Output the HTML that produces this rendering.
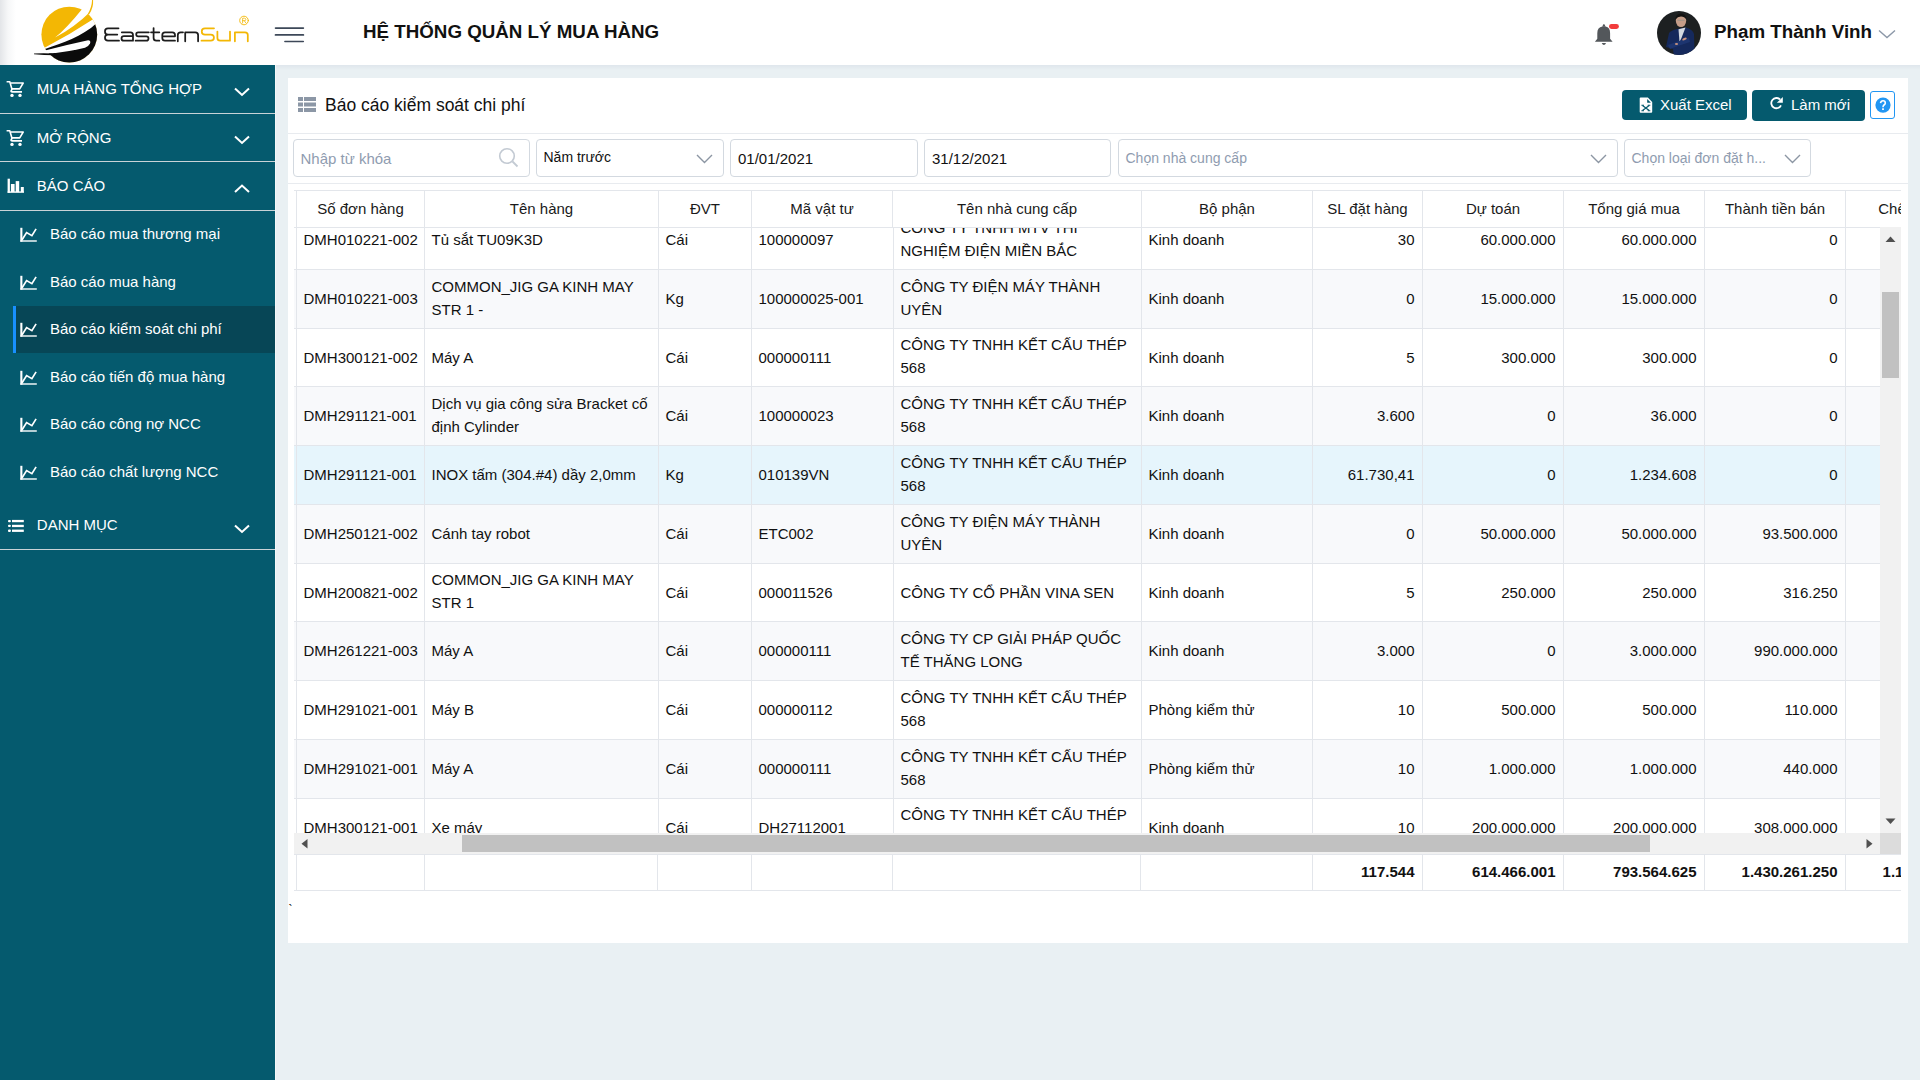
<!DOCTYPE html><html><head><meta charset="utf-8"><style>
*{box-sizing:border-box;margin:0;padding:0}
html,body{width:1920px;height:1080px;overflow:hidden}
body{background:#e9f0f3;font-family:"Liberation Sans", sans-serif;color:#000;position:relative}
.t{position:absolute;white-space:nowrap}
.a{position:absolute}
#hdr{position:absolute;left:0;top:0;width:1920px;height:65px;background:linear-gradient(to right,#e3e5e8 0,#f6f7f8 8px,#fff 16px)}
#side{position:absolute;left:0;top:65px;width:275px;height:1015px;background:#055a6e}
.sep{position:absolute;left:0;width:275px;height:1px;background:#c9d3d7}
#card{position:absolute;left:288px;top:78px;width:1620px;height:865px;background:#fff}
.hl{position:absolute;height:1px;background:#e8ebef}
.inp{position:absolute;top:139px;height:38px;border:1px solid #d3d9e0;border-radius:4px;background:#fff}
.btn{position:absolute;background:#055a6e;border-radius:4px}

.th,.td,.tf{position:absolute;border-left:1px solid #e3e6eb;font-size:15px;line-height:23px;display:flex;align-items:center;white-space:nowrap;overflow:hidden}
.th{justify-content:center;color:#1a1a1a;padding-bottom:2px}
.td{padding:0 7.5px 0 6.5px;color:#111}
.td.r{justify-content:flex-end}
.tf{padding:0 7.5px;font-weight:700;justify-content:flex-end;color:#111}
</style></head><body><div id="hdr"></div>
<div class="a" style="left:276px;top:65px;width:1644px;height:5px;background:linear-gradient(#dfe6ec,#e9f0f3)"></div>
<svg class="a" style="left:0;top:0" width="260" height="65" viewBox="0 0 260 65">
<defs><clipPath id="cc"><circle cx="69.3" cy="34.6" r="27.9"/></clipPath></defs>
<g clip-path="url(#cc)">
<rect x="35" y="0" width="70" height="70" fill="#f3b704"/>
<path d="M30 48.6 L44.6 47.8 Q70 34.5 93.5 19 L110 15 L110 70 L30 70Z" fill="#fff"/>
<path d="M30 50 L45.8 48.75 C62 43 82 37 96.7 23 L110 20 L110 70 L30 70Z" fill="#0b0b0b"/>
</g>
<path d="M55 37.6 Q66 29 83 8 L91 11 Q75 27 55 37.6Z" fill="#fff"/>
<path d="M44 50.8 Q66 45 88.1 40.3 Q91.2 40.6 90 43.5 Q88.5 46.5 85 47.8 Q70 51.6 52 53.3 L44 53.5Z" fill="#fff"/>
<path d="M87.6 14.2 Q91.8 7.5 92.1 0 L93.1 0 Q93.6 7.8 89.2 14.2Z" fill="#f3b704"/>
<path d="M34 53.4 Q44 53.3 52 53.4 L55 55.3 Q44 55.2 34 54.2Z" fill="#0b0b0b"/>
<g fill="none" stroke="#1c1c1c" stroke-width="1.75" stroke-linecap="round" stroke-linejoin="round">
<path d="M118.5 28.3 H108 Q105 28.3 105 31.2 V31.7 Q105 34.6 108 34.6 H117.3 M108 34.6 Q105 34.6 105 37.6 V37.8 Q105 40.7 108 40.7 H119"/>
<path d="M121.8 32.3 H130.5 Q133 32.3 133 35 V40.7 H124 Q121.5 40.7 121.5 38.4 Q121.5 36.2 124 36.2 H133"/>
<path d="M148.8 32.3 H138.2 Q136.2 32.3 136.2 34.2 Q136.2 36.3 138.2 36.3 H146.3 Q148.5 36.3 148.5 38.5 Q148.5 40.7 146.3 40.7 H135.6"/>
<path d="M153.6 28 V38 Q153.6 40.7 156.3 40.7 H159.3 M151 32.3 H159.3"/>
<path d="M162.3 36.3 H175 V35 Q175 32.3 172.3 32.3 H165 Q162.3 32.3 162.3 35 V38 Q162.3 40.7 165 40.7 H175"/>
<path d="M177.8 41.3 V35 Q177.8 32.3 180.6 32.3 H183"/>
<path d="M185.2 41.3 V32.3 H195.3 Q198.1 32.3 198.1 35 V41.3"/>
</g>
<g fill="none" stroke="#f3b704" stroke-width="1.75" stroke-linecap="round" stroke-linejoin="round">
<path d="M214 28.3 H205 Q201.8 28.3 201.8 31.2 V31.7 Q201.8 34.6 205 34.6 H210.8 Q213.9 34.6 213.9 37.6 V37.8 Q213.9 40.7 210.8 40.7 H201.5"/>
<path d="M217.4 31.6 V38 Q217.4 40.7 220.2 40.7 H230 V31.6"/>
<path d="M234.9 41.3 V32.3 H245 Q247.8 32.3 247.8 35 V41.3"/>
<circle cx="244" cy="20.5" r="4.3" stroke-width="0.9"/>
<path d="M242.6 23 V18.2 H244.5 Q245.8 18.2 245.8 19.5 Q245.8 20.7 244.4 20.7 H242.6 M244.3 20.7 L245.9 23" stroke-width="0.8"/>
</g>
</svg>
<svg class="a" style="left:270px;top:20px" width="40" height="30" viewBox="0 0 40 30"><g stroke="#3d4858" stroke-linecap="round" fill="none"><path d="M5.6 8.1 H33.3" stroke-width="1.8"/><path d="M5.6 14.9 H33.3" stroke-width="1.9"/><path d="M14.9 21.5 H33.3" stroke-width="1.6"/></g></svg>
<div class="t" style="left:363px;top:18.50px;font-size:18.75px;line-height:26px;font-weight:700;color:#111;">HỆ THỐNG QUẢN LÝ MUA HÀNG</div>
<svg class="a" style="left:1585px;top:15px" width="40" height="35" viewBox="0 0 40 35">
<path d="M17.3 11.8 Q18 8.9 18.9 8.9 Q19.8 8.9 20.6 11.8Z" fill="#53575b"/>
<path d="M12.3 23.8 V18.2 Q12.3 12.3 17.4 11.6 H20.6 Q25.1 12.3 25.1 18.2 V23.8 L27.6 26.8 H9.9Z" fill="#53575b"/>
<path d="M16.7 28 H21.1 Q20.1 29.9 18.9 29.9 Q17.7 29.9 16.7 28Z" fill="#53575b"/>
<rect x="24" y="9" width="9.9" height="4.9" rx="2.45" fill="#f23c3c"/>
</svg>
<svg class="a" style="left:1657px;top:10.5px" width="44" height="44" viewBox="0 0 44 44">
<defs><clipPath id="av"><circle cx="22" cy="22" r="22"/></clipPath></defs>
<g clip-path="url(#av)">
<rect width="44" height="44" fill="#1d2021"/>
<path d="M9 36 L12 22 Q14 19.5 20 18 L29 16.5 Q36 18.5 37 23 L37.5 40 L34 46 L17 46 L16 38Z" fill="#15295c"/>
<path d="M21.5 18.3 L28.5 16.5 L24.5 27 L22.5 31Z" fill="#d3d9e1"/>
<path d="M11 34 Q20 30.5 32 27 L33 31 Q22 34.5 13 38Z" fill="#1d3570"/>
<ellipse cx="27.5" cy="28" rx="2.4" ry="1.2" fill="#c9937f" transform="rotate(-25 27.5 28)"/>
<ellipse cx="19.5" cy="33" rx="1.6" ry="1" fill="#c9937f"/>
<ellipse cx="24" cy="9.5" rx="5.2" ry="6.6" fill="#c59d88"/>
<path d="M18.6 8.5 Q18.2 2.6 24 2.4 Q29.6 2.6 29.3 8.5 Q27.5 5.6 24 5.6 Q20.5 5.6 18.6 8.5Z" fill="#121212"/>
<path d="M20.5 9.3 H27.5" stroke="#8a8f8a" stroke-width="0.6"/>
</g></svg>
<div class="t" style="left:1714px;top:18.50px;font-size:18.75px;line-height:26px;font-weight:700;color:#111;">Phạm Thành Vinh</div>
<svg class="a" style="left:1878px;top:29px" width="18" height="10" viewBox="0 0 18 10"><path d="M1 1.5 L9 8.5 L17 1.5" fill="none" stroke="#8c98a8" stroke-width="1.4"/></svg>
<div id="side"></div>
<div class="a" style="left:275px;top:65px;width:1px;height:1015px;background:#f4f7f8"></div>
<svg class="a" style="left:0;top:75px" width="30" height="25" viewBox="0 0 30 25"><g fill="none" stroke="#fff" stroke-width="1.6" stroke-linejoin="round"><path d="M6.6 6.8 H9.8 L11.9 13.9 Q11.9 14.9 11.2 15.6 Q10.6 16.9 12.2 16.9 H22"/><path d="M10.6 8 H23.2 L19.7 13.9 H11.8"/></g><circle cx="12" cy="20.4" r="1.7" fill="#fff"/><circle cx="20" cy="20.4" r="1.7" fill="#fff"/></svg>
<div class="t" style="left:36.8px;top:78.30px;font-size:15px;line-height:21px;font-weight:400;color:#fff;">MUA HÀNG TỔNG HỢP</div>
<svg class="a" style="left:234px;top:87px" width="16" height="10" viewBox="0 0 16 10"><path d="M1 1.5 L8 8 L15 1.5" fill="none" stroke="#fff" stroke-width="2"/></svg>
<div class="sep" style="top:113px"></div>
<svg class="a" style="left:0;top:123.5px" width="30" height="25" viewBox="0 0 30 25"><g fill="none" stroke="#fff" stroke-width="1.6" stroke-linejoin="round"><path d="M6.6 6.8 H9.8 L11.9 13.9 Q11.9 14.9 11.2 15.6 Q10.6 16.9 12.2 16.9 H22"/><path d="M10.6 8 H23.2 L19.7 13.9 H11.8"/></g><circle cx="12" cy="20.4" r="1.7" fill="#fff"/><circle cx="20" cy="20.4" r="1.7" fill="#fff"/></svg>
<div class="t" style="left:36.8px;top:126.80px;font-size:15px;line-height:21px;font-weight:400;color:#fff;">MỞ RỘNG</div>
<svg class="a" style="left:234px;top:135px" width="16" height="10" viewBox="0 0 16 10"><path d="M1 1.5 L8 8 L15 1.5" fill="none" stroke="#fff" stroke-width="2"/></svg>
<div class="sep" style="top:161px"></div>
<svg class="a" style="left:0;top:172px" width="30" height="25" viewBox="0 0 30 25"><g fill="#fff"><rect x="7.6" y="6.7" width="2.3" height="14.1"/><rect x="7.6" y="19.4" width="16.4" height="1.4"/><rect x="10.9" y="12" width="3.7" height="8"/><rect x="15.7" y="9.1" width="3.5" height="11"/><rect x="20.8" y="15" width="3" height="5"/></g></svg>
<div class="t" style="left:36.8px;top:175.30px;font-size:15px;line-height:21px;font-weight:400;color:#fff;">BÁO CÁO</div>
<svg class="a" style="left:234px;top:184px" width="16" height="10" viewBox="0 0 16 10"><path d="M1 8 L8 1.5 L15 8" fill="none" stroke="#fff" stroke-width="2"/></svg>
<div class="sep" style="top:210px"></div>
<div class="a" style="left:13px;top:306px;width:262px;height:47px;background:#074656"></div>
<div class="a" style="left:13px;top:306px;width:3px;height:47px;background:#1890ff"></div>
<svg class="a" style="left:15px;top:222px" width="30" height="25" viewBox="0 0 30 25"><rect x="5.3" y="5.8" width="2.1" height="13.9" fill="#fff"/><rect x="5.3" y="18.3" width="16.5" height="1.4" fill="#fff"/><path d="M6.9 18 L11.6 10.6 L16.9 13.7 L21.1 6.9" fill="none" stroke="#fff" stroke-width="1.7"/></svg>
<div class="t" style="left:50px;top:223.30px;font-size:15px;line-height:21px;font-weight:400;color:#fff;">Báo cáo mua thương mại</div>
<svg class="a" style="left:15px;top:270px" width="30" height="25" viewBox="0 0 30 25"><rect x="5.3" y="5.8" width="2.1" height="13.9" fill="#fff"/><rect x="5.3" y="18.3" width="16.5" height="1.4" fill="#fff"/><path d="M6.9 18 L11.6 10.6 L16.9 13.7 L21.1 6.9" fill="none" stroke="#fff" stroke-width="1.7"/></svg>
<div class="t" style="left:50px;top:270.85px;font-size:15px;line-height:21px;font-weight:400;color:#fff;">Báo cáo mua hàng</div>
<svg class="a" style="left:15px;top:317px" width="30" height="25" viewBox="0 0 30 25"><rect x="5.3" y="5.8" width="2.1" height="13.9" fill="#fff"/><rect x="5.3" y="18.3" width="16.5" height="1.4" fill="#fff"/><path d="M6.9 18 L11.6 10.6 L16.9 13.7 L21.1 6.9" fill="none" stroke="#fff" stroke-width="1.7"/></svg>
<div class="t" style="left:50px;top:318.40px;font-size:15px;line-height:21px;font-weight:400;color:#fff;">Báo cáo kiểm soát chi phí</div>
<svg class="a" style="left:15px;top:365px" width="30" height="25" viewBox="0 0 30 25"><rect x="5.3" y="5.8" width="2.1" height="13.9" fill="#fff"/><rect x="5.3" y="18.3" width="16.5" height="1.4" fill="#fff"/><path d="M6.9 18 L11.6 10.6 L16.9 13.7 L21.1 6.9" fill="none" stroke="#fff" stroke-width="1.7"/></svg>
<div class="t" style="left:50px;top:365.95px;font-size:15px;line-height:21px;font-weight:400;color:#fff;">Báo cáo tiến độ mua hàng</div>
<svg class="a" style="left:15px;top:412px" width="30" height="25" viewBox="0 0 30 25"><rect x="5.3" y="5.8" width="2.1" height="13.9" fill="#fff"/><rect x="5.3" y="18.3" width="16.5" height="1.4" fill="#fff"/><path d="M6.9 18 L11.6 10.6 L16.9 13.7 L21.1 6.9" fill="none" stroke="#fff" stroke-width="1.7"/></svg>
<div class="t" style="left:50px;top:412.80px;font-size:15px;line-height:21px;font-weight:400;color:#fff;">Báo cáo công nợ NCC</div>
<svg class="a" style="left:15px;top:460px" width="30" height="25" viewBox="0 0 30 25"><rect x="5.3" y="5.8" width="2.1" height="13.9" fill="#fff"/><rect x="5.3" y="18.3" width="16.5" height="1.4" fill="#fff"/><path d="M6.9 18 L11.6 10.6 L16.9 13.7 L21.1 6.9" fill="none" stroke="#fff" stroke-width="1.7"/></svg>
<div class="t" style="left:50px;top:461.05px;font-size:15px;line-height:21px;font-weight:400;color:#fff;">Báo cáo chất lượng NCC</div>
<svg class="a" style="left:0;top:512px" width="30" height="25" viewBox="0 0 30 25"><g fill="#fff"><rect x="8" y="7.9" width="2.9" height="2.3" rx="1"/><rect x="8" y="12.8" width="2.9" height="2.3" rx="1"/><rect x="8" y="17.6" width="2.9" height="2.3" rx="1"/><rect x="12" y="7.9" width="11.8" height="2.3"/><rect x="12" y="12.8" width="11.8" height="2.3"/><rect x="12" y="17.6" width="11.8" height="2.3"/></g></svg>
<div class="t" style="left:36.8px;top:514.30px;font-size:15px;line-height:21px;font-weight:400;color:#fff;">DANH MỤC</div>
<svg class="a" style="left:234px;top:524px" width="16" height="10" viewBox="0 0 16 10"><path d="M1 1.5 L8 8 L15 1.5" fill="none" stroke="#fff" stroke-width="2"/></svg>
<div class="sep" style="top:549px"></div>
<div id="card"></div>
<div class="hl" style="left:288px;top:133px;width:1620px"></div>
<div class="hl" style="left:288px;top:183px;width:1620px"></div>
<svg class="a" style="left:298px;top:97px" width="18" height="15" viewBox="0 0 18 15"><g fill="#8c97a6"><rect x="0" y="0" width="5" height="4"/><rect x="6" y="0" width="12" height="4"/><rect x="0" y="5.5" width="5" height="4"/><rect x="6" y="5.5" width="12" height="4"/><rect x="0" y="11" width="5" height="4"/><rect x="6" y="11" width="12" height="4"/></g></svg>
<div class="t" style="left:325px;top:93.44px;font-size:17.5px;line-height:24px;font-weight:400;color:#111;">Báo cáo kiểm soát chi phí</div>
<div class="btn" style="left:1622px;top:90px;width:125px;height:30px"></div>
<svg class="a" style="left:1639px;top:97px" width="14" height="16" viewBox="0 0 14 16"><path d="M1.6 0.4 H8.8 L13.2 4.9 V14.8 Q13.2 15.8 12.2 15.8 H1.6 Q0.7 15.8 0.7 14.8 V1.4 Q0.7 0.4 1.6 0.4Z" fill="#fff"/><path d="M8.2 1.9 V5.8 H11.9Z" fill="#055a6e"/><g stroke="#055a6e" fill="none"><path d="M3.5 8.4 L10.2 13.6 M10.2 8.4 L3.5 13.6" stroke-width="1.3"/><path d="M2.4 8.2 H5 M8.7 8.2 H11.3 M2.4 13.8 H5 M8.7 13.8 H11.3" stroke-width="1.1"/></g></svg>
<div class="t" style="left:1660px;top:94.30px;font-size:15px;line-height:21px;font-weight:400;color:#fff;">Xuất Excel</div>
<div class="btn" style="left:1752px;top:90px;width:113px;height:31px"></div>
<svg class="a" style="left:1768px;top:95px" width="17" height="16" viewBox="0 0 17 16"><path d="M13.02 10.26 A5.1 5.1 0 1 1 12.0 4.5" fill="none" stroke="#fff" stroke-width="1.8"/><path d="M14.8 2 V7.8 H8.8Z" fill="#fff"/></svg>
<div class="t" style="left:1791px;top:94.30px;font-size:15px;line-height:21px;font-weight:400;color:#fff;">Làm mới</div>
<div class="a" style="left:1870px;top:91px;width:25px;height:28px;border:1px solid #2196f3;border-radius:3px;background:#fff"></div>
<svg class="a" style="left:1875px;top:97px" width="16" height="16" viewBox="0 0 16 16"><circle cx="8" cy="8.1" r="7.6" fill="#2196f3"/><path d="M5.5 6.1 Q5.9 3.8 8 3.8 Q10.3 3.8 10.3 5.9 Q10.3 7.1 9 8 Q8 8.7 8 10.2" fill="none" stroke="#fff" stroke-width="1.6"/><rect x="7.1" y="11.3" width="1.8" height="1.7" fill="#fff"/></svg>
<div class="inp" style="left:293px;width:237px"></div>
<div class="t" style="left:300.5px;top:148.30px;font-size:15px;line-height:21px;font-weight:400;color:#8f9cb0;">Nhập từ khóa</div>
<svg class="a" style="left:498px;top:147px" width="22" height="22" viewBox="0 0 22 22"><circle cx="9" cy="9" r="7.3" fill="none" stroke="#c3cad3" stroke-width="1.6"/><path d="M14.5 14.5 L19.5 19.5" stroke="#c3cad3" stroke-width="1.8"/></svg>
<div class="inp" style="left:536px;width:188px"></div>
<div class="t" style="left:543.5px;top:147.15px;font-size:14px;line-height:20px;font-weight:400;color:#111;">Năm trước</div>
<svg class="a" style="left:696px;top:154px" width="18" height="10" viewBox="0 0 18 10"><path d="M1 1 L8.5 8.5 L16 1" fill="none" stroke="#8c96a3" stroke-width="1.4"/></svg>
<div class="inp" style="left:730px;width:188px"></div>
<div class="t" style="left:738px;top:148.30px;font-size:15px;line-height:21px;font-weight:400;color:#111;">01/01/2021</div>
<div class="inp" style="left:924px;width:187px"></div>
<div class="t" style="left:932px;top:148.30px;font-size:15px;line-height:21px;font-weight:400;color:#111;">31/12/2021</div>
<div class="inp" style="left:1118px;width:500px"></div>
<div class="t" style="left:1125.5px;top:148.15px;font-size:14px;line-height:20px;font-weight:400;color:#8f9cb0;">Chọn nhà cung cấp</div>
<svg class="a" style="left:1590px;top:154px" width="18" height="10" viewBox="0 0 18 10"><path d="M1 1 L8.5 8.5 L16 1" fill="none" stroke="#8c96a3" stroke-width="1.4"/></svg>
<div class="inp" style="left:1624px;width:187px"></div>
<div class="t" style="left:1631.5px;top:148.15px;font-size:14px;line-height:20px;font-weight:400;color:#8f9cb0;">Chọn loại đơn đặt h...</div>
<svg class="a" style="left:1784px;top:154px" width="18" height="10" viewBox="0 0 18 10"><path d="M1 1 L8.5 8.5 L16 1" fill="none" stroke="#8c96a3" stroke-width="1.4"/></svg>
<div class="t" style="left:288.5px;top:903px;font-size:12px;line-height:14px;color:#000">`</div>
<div class="a" style="left:294px;top:190px;width:1607px;height:1px;background:#e3e6eb"></div>
<div class="a" style="left:294px;top:227px;width:1607px;height:1px;background:#e3e6eb"></div>
<div class="a" style="left:294px;top:191px;width:1607px;height:36px;overflow:hidden">
<div class="th" style="left:2px;top:0;width:128px;height:36px">Số đơn hàng</div>
<div class="th" style="left:130px;top:0;width:234px;height:36px">Tên hàng</div>
<div class="th" style="left:364px;top:0;width:93px;height:36px">ĐVT</div>
<div class="th" style="left:457px;top:0;width:141px;height:36px">Mã vật tư</div>
<div class="th" style="left:598px;top:0;width:249px;height:36px">Tên nhà cung cấp</div>
<div class="th" style="left:847px;top:0;width:171px;height:36px">Bộ phận</div>
<div class="th" style="left:1018px;top:0;width:110px;height:36px">SL đặt hàng</div>
<div class="th" style="left:1128px;top:0;width:141px;height:36px">Dự toán</div>
<div class="th" style="left:1269px;top:0;width:141px;height:36px">Tổng giá mua</div>
<div class="th" style="left:1410px;top:0;width:141px;height:36px">Thành tiền bán</div>
<div class="th" style="left:1551px;top:0;width:118px;height:36px">Chế tạo</div>
</div>
<div class="a" style="left:294px;top:228px;width:1586px;height:605px;overflow:hidden">
<div class="a" style="left:0;top:-17px;width:1586px;height:58px;background:#fff"></div>
<div class="a" style="left:0;top:41px;width:1586px;height:1px;background:#e3e6eb"></div>
<div class="td" style="left:2px;top:-18px;width:128px;height:59px;">DMH010221-002</div>
<div class="td" style="left:130px;top:-18px;width:234px;height:59px;">Tủ sắt TU09K3D</div>
<div class="td" style="left:364px;top:-18px;width:93px;height:59px;">Cái</div>
<div class="td" style="left:457px;top:-18px;width:142px;height:59px;">100000097</div>
<div class="td" style="left:599px;top:-18px;width:248px;height:59px;padding-bottom:2px;">CÔNG TY TNHH MTV THÍ<br>NGHIỆM ĐIỆN MIỀN BẮC</div>
<div class="td" style="left:847px;top:-18px;width:171px;height:59px;">Kinh doanh</div>
<div class="td r" style="left:1018px;top:-18px;width:110px;height:59px;">30</div>
<div class="td r" style="left:1128px;top:-18px;width:141px;height:59px;">60.000.000</div>
<div class="td r" style="left:1269px;top:-18px;width:141px;height:59px;">60.000.000</div>
<div class="td r" style="left:1410px;top:-18px;width:141px;height:59px;">0</div>
<div class="td r" style="left:1551px;top:-18px;width:145px;height:59px;"></div>
<div class="a" style="left:0;top:42px;width:1586px;height:58px;background:#f8f9fb"></div>
<div class="a" style="left:0;top:100px;width:1586px;height:1px;background:#e3e6eb"></div>
<div class="td" style="left:2px;top:41px;width:128px;height:59px;">DMH010221-003</div>
<div class="td" style="left:130px;top:41px;width:234px;height:59px;padding-bottom:2px;">COMMON_JIG GA KINH MAY<br>STR 1 -</div>
<div class="td" style="left:364px;top:41px;width:93px;height:59px;">Kg</div>
<div class="td" style="left:457px;top:41px;width:142px;height:59px;">100000025-001</div>
<div class="td" style="left:599px;top:41px;width:248px;height:59px;padding-bottom:2px;">CÔNG TY ĐIỆN MÁY THÀNH<br>UYÊN</div>
<div class="td" style="left:847px;top:41px;width:171px;height:59px;">Kinh doanh</div>
<div class="td r" style="left:1018px;top:41px;width:110px;height:59px;">0</div>
<div class="td r" style="left:1128px;top:41px;width:141px;height:59px;">15.000.000</div>
<div class="td r" style="left:1269px;top:41px;width:141px;height:59px;">15.000.000</div>
<div class="td r" style="left:1410px;top:41px;width:141px;height:59px;">0</div>
<div class="td r" style="left:1551px;top:41px;width:145px;height:59px;"></div>
<div class="a" style="left:0;top:101px;width:1586px;height:57px;background:#fff"></div>
<div class="a" style="left:0;top:158px;width:1586px;height:1px;background:#e3e6eb"></div>
<div class="td" style="left:2px;top:100px;width:128px;height:58px;">DMH300121-002</div>
<div class="td" style="left:130px;top:100px;width:234px;height:58px;">Máy A</div>
<div class="td" style="left:364px;top:100px;width:93px;height:58px;">Cái</div>
<div class="td" style="left:457px;top:100px;width:142px;height:58px;">000000111</div>
<div class="td" style="left:599px;top:100px;width:248px;height:58px;padding-bottom:2px;">CÔNG TY TNHH KẾT CẤU THÉP<br>568</div>
<div class="td" style="left:847px;top:100px;width:171px;height:58px;">Kinh doanh</div>
<div class="td r" style="left:1018px;top:100px;width:110px;height:58px;">5</div>
<div class="td r" style="left:1128px;top:100px;width:141px;height:58px;">300.000</div>
<div class="td r" style="left:1269px;top:100px;width:141px;height:58px;">300.000</div>
<div class="td r" style="left:1410px;top:100px;width:141px;height:58px;">0</div>
<div class="td r" style="left:1551px;top:100px;width:145px;height:58px;"></div>
<div class="a" style="left:0;top:159px;width:1586px;height:58px;background:#f8f9fb"></div>
<div class="a" style="left:0;top:217px;width:1586px;height:1px;background:#e3e6eb"></div>
<div class="td" style="left:2px;top:158px;width:128px;height:59px;">DMH291121-001</div>
<div class="td" style="left:130px;top:158px;width:234px;height:59px;padding-bottom:2px;">Dịch vụ gia công sửa Bracket cố<br>định Cylinder</div>
<div class="td" style="left:364px;top:158px;width:93px;height:59px;">Cái</div>
<div class="td" style="left:457px;top:158px;width:142px;height:59px;">100000023</div>
<div class="td" style="left:599px;top:158px;width:248px;height:59px;padding-bottom:2px;">CÔNG TY TNHH KẾT CẤU THÉP<br>568</div>
<div class="td" style="left:847px;top:158px;width:171px;height:59px;">Kinh doanh</div>
<div class="td r" style="left:1018px;top:158px;width:110px;height:59px;">3.600</div>
<div class="td r" style="left:1128px;top:158px;width:141px;height:59px;">0</div>
<div class="td r" style="left:1269px;top:158px;width:141px;height:59px;">36.000</div>
<div class="td r" style="left:1410px;top:158px;width:141px;height:59px;">0</div>
<div class="td r" style="left:1551px;top:158px;width:145px;height:59px;"></div>
<div class="a" style="left:0;top:218px;width:1586px;height:58px;background:#e6f5fc"></div>
<div class="a" style="left:0;top:276px;width:1586px;height:1px;background:#e3e6eb"></div>
<div class="td" style="left:2px;top:217px;width:128px;height:59px;">DMH291121-001</div>
<div class="td" style="left:130px;top:217px;width:234px;height:59px;">INOX tấm (304.#4) dầy 2,0mm</div>
<div class="td" style="left:364px;top:217px;width:93px;height:59px;">Kg</div>
<div class="td" style="left:457px;top:217px;width:142px;height:59px;">010139VN</div>
<div class="td" style="left:599px;top:217px;width:248px;height:59px;padding-bottom:2px;">CÔNG TY TNHH KẾT CẤU THÉP<br>568</div>
<div class="td" style="left:847px;top:217px;width:171px;height:59px;">Kinh doanh</div>
<div class="td r" style="left:1018px;top:217px;width:110px;height:59px;">61.730,41</div>
<div class="td r" style="left:1128px;top:217px;width:141px;height:59px;">0</div>
<div class="td r" style="left:1269px;top:217px;width:141px;height:59px;">1.234.608</div>
<div class="td r" style="left:1410px;top:217px;width:141px;height:59px;">0</div>
<div class="td r" style="left:1551px;top:217px;width:145px;height:59px;"></div>
<div class="a" style="left:0;top:277px;width:1586px;height:58px;background:#f8f9fb"></div>
<div class="a" style="left:0;top:335px;width:1586px;height:1px;background:#e3e6eb"></div>
<div class="td" style="left:2px;top:276px;width:128px;height:59px;">DMH250121-002</div>
<div class="td" style="left:130px;top:276px;width:234px;height:59px;">Cánh tay robot</div>
<div class="td" style="left:364px;top:276px;width:93px;height:59px;">Cái</div>
<div class="td" style="left:457px;top:276px;width:142px;height:59px;">ETC002</div>
<div class="td" style="left:599px;top:276px;width:248px;height:59px;padding-bottom:2px;">CÔNG TY ĐIỆN MÁY THÀNH<br>UYÊN</div>
<div class="td" style="left:847px;top:276px;width:171px;height:59px;">Kinh doanh</div>
<div class="td r" style="left:1018px;top:276px;width:110px;height:59px;">0</div>
<div class="td r" style="left:1128px;top:276px;width:141px;height:59px;">50.000.000</div>
<div class="td r" style="left:1269px;top:276px;width:141px;height:59px;">50.000.000</div>
<div class="td r" style="left:1410px;top:276px;width:141px;height:59px;">93.500.000</div>
<div class="td r" style="left:1551px;top:276px;width:145px;height:59px;"></div>
<div class="a" style="left:0;top:336px;width:1586px;height:57px;background:#fff"></div>
<div class="a" style="left:0;top:393px;width:1586px;height:1px;background:#e3e6eb"></div>
<div class="td" style="left:2px;top:335px;width:128px;height:58px;">DMH200821-002</div>
<div class="td" style="left:130px;top:335px;width:234px;height:58px;padding-bottom:2px;">COMMON_JIG GA KINH MAY<br>STR 1</div>
<div class="td" style="left:364px;top:335px;width:93px;height:58px;">Cái</div>
<div class="td" style="left:457px;top:335px;width:142px;height:58px;">000011526</div>
<div class="td" style="left:599px;top:335px;width:248px;height:58px;">CÔNG TY CỔ PHẦN VINA SEN</div>
<div class="td" style="left:847px;top:335px;width:171px;height:58px;">Kinh doanh</div>
<div class="td r" style="left:1018px;top:335px;width:110px;height:58px;">5</div>
<div class="td r" style="left:1128px;top:335px;width:141px;height:58px;">250.000</div>
<div class="td r" style="left:1269px;top:335px;width:141px;height:58px;">250.000</div>
<div class="td r" style="left:1410px;top:335px;width:141px;height:58px;">316.250</div>
<div class="td r" style="left:1551px;top:335px;width:145px;height:58px;"></div>
<div class="a" style="left:0;top:394px;width:1586px;height:58px;background:#f8f9fb"></div>
<div class="a" style="left:0;top:452px;width:1586px;height:1px;background:#e3e6eb"></div>
<div class="td" style="left:2px;top:393px;width:128px;height:59px;">DMH261221-003</div>
<div class="td" style="left:130px;top:393px;width:234px;height:59px;">Máy A</div>
<div class="td" style="left:364px;top:393px;width:93px;height:59px;">Cái</div>
<div class="td" style="left:457px;top:393px;width:142px;height:59px;">000000111</div>
<div class="td" style="left:599px;top:393px;width:248px;height:59px;padding-bottom:2px;">CÔNG TY CP GIẢI PHÁP QUỐC<br>TẾ THĂNG LONG</div>
<div class="td" style="left:847px;top:393px;width:171px;height:59px;">Kinh doanh</div>
<div class="td r" style="left:1018px;top:393px;width:110px;height:59px;">3.000</div>
<div class="td r" style="left:1128px;top:393px;width:141px;height:59px;">0</div>
<div class="td r" style="left:1269px;top:393px;width:141px;height:59px;">3.000.000</div>
<div class="td r" style="left:1410px;top:393px;width:141px;height:59px;">990.000.000</div>
<div class="td r" style="left:1551px;top:393px;width:145px;height:59px;"></div>
<div class="a" style="left:0;top:453px;width:1586px;height:58px;background:#fff"></div>
<div class="a" style="left:0;top:511px;width:1586px;height:1px;background:#e3e6eb"></div>
<div class="td" style="left:2px;top:452px;width:128px;height:59px;">DMH291021-001</div>
<div class="td" style="left:130px;top:452px;width:234px;height:59px;">Máy B</div>
<div class="td" style="left:364px;top:452px;width:93px;height:59px;">Cái</div>
<div class="td" style="left:457px;top:452px;width:142px;height:59px;">000000112</div>
<div class="td" style="left:599px;top:452px;width:248px;height:59px;padding-bottom:2px;">CÔNG TY TNHH KẾT CẤU THÉP<br>568</div>
<div class="td" style="left:847px;top:452px;width:171px;height:59px;">Phòng kiểm thử</div>
<div class="td r" style="left:1018px;top:452px;width:110px;height:59px;">10</div>
<div class="td r" style="left:1128px;top:452px;width:141px;height:59px;">500.000</div>
<div class="td r" style="left:1269px;top:452px;width:141px;height:59px;">500.000</div>
<div class="td r" style="left:1410px;top:452px;width:141px;height:59px;">110.000</div>
<div class="td r" style="left:1551px;top:452px;width:145px;height:59px;"></div>
<div class="a" style="left:0;top:512px;width:1586px;height:58px;background:#f8f9fb"></div>
<div class="a" style="left:0;top:570px;width:1586px;height:1px;background:#e3e6eb"></div>
<div class="td" style="left:2px;top:511px;width:128px;height:59px;">DMH291021-001</div>
<div class="td" style="left:130px;top:511px;width:234px;height:59px;">Máy A</div>
<div class="td" style="left:364px;top:511px;width:93px;height:59px;">Cái</div>
<div class="td" style="left:457px;top:511px;width:142px;height:59px;">000000111</div>
<div class="td" style="left:599px;top:511px;width:248px;height:59px;padding-bottom:2px;">CÔNG TY TNHH KẾT CẤU THÉP<br>568</div>
<div class="td" style="left:847px;top:511px;width:171px;height:59px;">Phòng kiểm thử</div>
<div class="td r" style="left:1018px;top:511px;width:110px;height:59px;">10</div>
<div class="td r" style="left:1128px;top:511px;width:141px;height:59px;">1.000.000</div>
<div class="td r" style="left:1269px;top:511px;width:141px;height:59px;">1.000.000</div>
<div class="td r" style="left:1410px;top:511px;width:141px;height:59px;">440.000</div>
<div class="td r" style="left:1551px;top:511px;width:145px;height:59px;"></div>
<div class="a" style="left:0;top:571px;width:1586px;height:57px;background:#fff"></div>
<div class="a" style="left:0;top:628px;width:1586px;height:1px;background:#e3e6eb"></div>
<div class="td" style="left:2px;top:570px;width:128px;height:58px;">DMH300121-001</div>
<div class="td" style="left:130px;top:570px;width:234px;height:58px;">Xe máy</div>
<div class="td" style="left:364px;top:570px;width:93px;height:58px;">Cái</div>
<div class="td" style="left:457px;top:570px;width:142px;height:58px;">DH27112001</div>
<div class="td" style="left:599px;top:570px;width:248px;height:58px;padding-bottom:2px;">CÔNG TY TNHH KẾT CẤU THÉP<br>568</div>
<div class="td" style="left:847px;top:570px;width:171px;height:58px;">Kinh doanh</div>
<div class="td r" style="left:1018px;top:570px;width:110px;height:58px;">10</div>
<div class="td r" style="left:1128px;top:570px;width:141px;height:58px;">200.000.000</div>
<div class="td r" style="left:1269px;top:570px;width:141px;height:58px;">200.000.000</div>
<div class="td r" style="left:1410px;top:570px;width:141px;height:58px;">308.000.000</div>
<div class="td r" style="left:1551px;top:570px;width:145px;height:58px;"></div>
</div>
<div class="a" style="left:1880px;top:227px;width:21px;height:606px;background:#f1f1f1"></div>
<div class="a" style="left:1882px;top:292px;width:17px;height:86px;background:#c1c1c1"></div>
<svg class="a" style="left:1885px;top:236px" width="11" height="7" viewBox="0 0 11 7"><path d="M0.5 6 L5.5 0.5 L10.5 6Z" fill="#505050"/></svg>
<svg class="a" style="left:1885px;top:818px" width="11" height="7" viewBox="0 0 11 7"><path d="M0.5 0.5 L5.5 6 L10.5 0.5Z" fill="#505050"/></svg>
<div class="a" style="left:294px;top:833px;width:1586px;height:21px;background:#f1f1f1"></div>
<div class="a" style="left:462px;top:835px;width:1188px;height:17px;background:#c1c1c1"></div>
<div class="a" style="left:1880px;top:833px;width:21px;height:21px;background:#dcdcdc"></div>
<svg class="a" style="left:301px;top:839px" width="7" height="10" viewBox="0 0 7 10"><path d="M6.5 0 L0.5 4.8 L6.5 9.5Z" fill="#505050"/></svg>
<svg class="a" style="left:1866px;top:839px" width="7" height="10" viewBox="0 0 7 10"><path d="M0.5 0 L6.5 4.8 L0.5 9.5Z" fill="#505050"/></svg>
<div class="a" style="left:294px;top:854px;width:1607px;height:1px;background:#e3e6eb"></div>
<div class="a" style="left:294px;top:890px;width:1607px;height:1px;background:#e3e6eb"></div>
<div class="a" style="left:294px;top:855px;width:1607px;height:35px;overflow:hidden"><div class="a" style="left:0;top:-1px;width:1700px;height:36px">
<div class="tf" style="left:2px;top:0;width:128px;height:36px;padding-bottom:1px"></div>
<div class="tf" style="left:130px;top:0;width:233px;height:36px;padding-bottom:1px"></div>
<div class="tf" style="left:363px;top:0;width:94px;height:36px;padding-bottom:1px"></div>
<div class="tf" style="left:457px;top:0;width:141px;height:36px;padding-bottom:1px"></div>
<div class="tf" style="left:598px;top:0;width:248px;height:36px;padding-bottom:1px"></div>
<div class="tf" style="left:846px;top:0;width:172px;height:36px;padding-bottom:1px"></div>
<div class="tf" style="left:1018px;top:0;width:110px;height:36px;padding-bottom:1px">117.544</div>
<div class="tf" style="left:1128px;top:0;width:141px;height:36px;padding-bottom:1px">614.466.001</div>
<div class="tf" style="left:1269px;top:0;width:141px;height:36px;padding-bottom:1px">793.564.625</div>
<div class="tf" style="left:1410px;top:0;width:141px;height:36px;padding-bottom:1px">1.430.261.250</div>
<div class="tf" style="left:1551px;top:0;width:141px;height:36px;padding-bottom:1px">1.130.000.000</div>
</div></div></body></html>
